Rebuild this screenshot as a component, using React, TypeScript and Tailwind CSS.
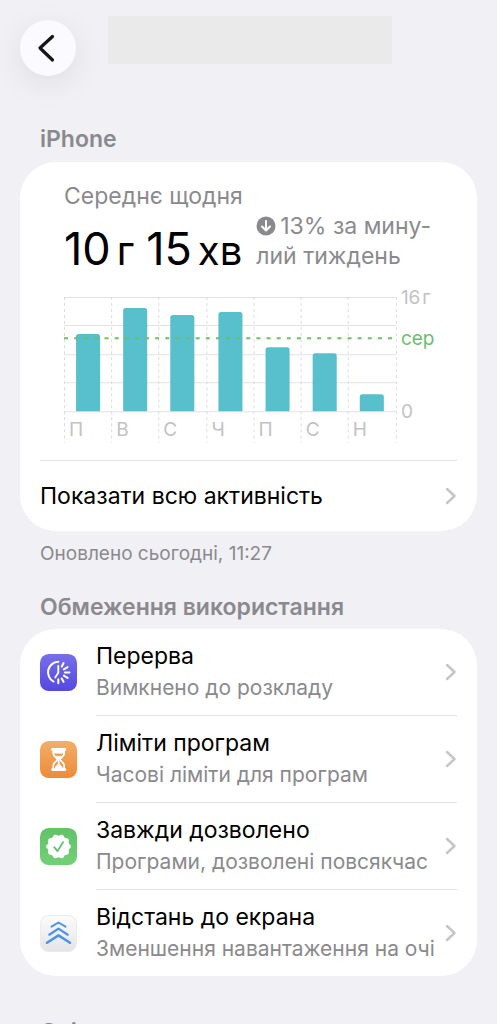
import type { ReactNode } from "react";

const days = [
  { label: "П", value: 77 },
  { label: "В", value: 103 },
  { label: "С", value: 96 },
  { label: "Ч", value: 99 },
  { label: "П", value: 64 },
  { label: "С", value: 58 },
  { label: "Н", value: 17 },
];

const columnEdges = [0, 47, 94, 142, 189, 236, 283, 331];
const gridLines = [9, 37, 66, 94, 123];

function Chevron() {
  return (
    <svg viewBox="0 0 12 20" className="h-5 w-3 shrink-0" fill="none" stroke="#c6c6c9" strokeWidth="2.5" strokeLinecap="round" strokeLinejoin="round" aria-hidden="true">
      <path d="M2 3l7.500 7L2 17" />
    </svg>
  );
}

function UsageChart() {
  return (
    <svg viewBox="0 0 376 158" className="block w-full" role="img" aria-label="Середнє щодня">
      <g stroke="#e2e2e4" strokeWidth="1">
        {gridLines.map((y) => (
          <path key={y} d={`M0 ${y + 0.5}H331`} />
        ))}
      </g>
      <g stroke="#dcdcdf" strokeWidth="1" strokeDasharray="3 3">
        {columnEdges.map((x) => (
          <path key={x} d={`M${x + 0.5} 9V154`} />
        ))}
      </g>
      {days.map((day, i) => {
        const x = columnEdges[i] + 12;
        const top = 123 - day.value;
        return (
          <g key={i}>
            <path d={`M${x} 123V${top + 2.5}q0-2.500 2.500-2.500h19q2.500 0 2.500 2.500V123z`} fill="#58bfcd" />
            <text x={columnEdges[i] + 5} y="148" fontSize="19" fill="#c2c2c4">
              {day.label}
            </text>
          </g>
        );
      })}
      <path d="M0 50H331" stroke="#6cbf63" strokeWidth="2" strokeDasharray="4 6.1" />
      <text x="336" y="16" fontSize="19" fill="#c2c2c4">{"16\u200Aг"}</text>
      <text x="336" y="57" fontSize="19" fill="#6cbf6c">сер</text>
      <text x="336" y="130" fontSize="19" fill="#c2c2c4">0</text>
    </svg>
  );
}

function DowntimeIcon() {
  return (
    <svg viewBox="0 0 36 36" className="size-[37px] shrink-0" aria-hidden="true">
      <defs>
        <linearGradient id="downtime" x1="0" y1="0" x2="0" y2="1">
          <stop offset="0" stopColor="#786fe8" />
          <stop offset="1" stopColor="#5448e2" />
        </linearGradient>
      </defs>
      <rect width="36" height="36" rx="8.5" fill="url(#downtime)" />
      <g fill="none" stroke="#fff" strokeLinecap="round">
        <path d="M17.800 7.600A10.200 10.200 0 0 0 13.200 26.800" strokeWidth="2" />
        <path d="M17.800 11.500V18.300l-3 4.500" strokeWidth="1.800" strokeLinejoin="round" />
        <path d="M22.900 8.900l-1.700 3.300M26.800 12.700l-3.600 2.200M28.600 18h-4.400M26.800 23.300l-3.600-2.200M22.900 27.100l-1.800-3.300M17.800 28.400v-3.800" strokeWidth="2" />
      </g>
    </svg>
  );
}

function LimitsIcon() {
  return (
    <svg viewBox="0 0 36 36" className="size-[37px] shrink-0" aria-hidden="true">
      <defs>
        <linearGradient id="limits" x1="0" y1="0" x2="0" y2="1">
          <stop offset="0" stopColor="#f2ae68" />
          <stop offset="1" stopColor="#ee8b39" />
        </linearGradient>
      </defs>
      <rect width="36" height="36" rx="8.5" fill="url(#limits)" />
      <g fill="none" stroke="#fff" strokeWidth="1.700" strokeLinecap="round" strokeLinejoin="round">
        <path d="M12.200 8.200h12M12.200 27.800h12" strokeWidth="2.800" />
        <path d="M12.900 9v3.200c0 3 4 4 4 5.800s-4 2.800-4 5.800V27M23.500 9v3.200c0 3-4 4-4 5.800s4 2.800 4 5.800V27" />
      </g>
      <path d="M13 9h10.400v3.200H13zM14.600 14.500h7.200l-2.800 3v4.300c.3 1.500 3 2.400 3.200 5.200h-8c.2-2.800 2.900-3.700 3.200-5.200v-4.300z" fill="#fff" />
    </svg>
  );
}

function sealPath() {
  const points: string[] = [];
  for (let i = 0; i <= 80; i++) {
    const a = (i / 80) * Math.PI * 2;
    const r = 11.3 + 0.8 * Math.cos(a * 10 + Math.PI);
    points.push(`${(18 + r * Math.sin(a)).toFixed(2)} ${(18 - r * Math.cos(a)).toFixed(2)}`);
  }
  return `M${points.join("L")}z`;
}

function AllowedIcon() {
  return (
    <svg viewBox="0 0 36 36" className="size-[37px] shrink-0" aria-hidden="true">
      <defs>
        <linearGradient id="allowed" x1="0" y1="0" x2="0" y2="1">
          <stop offset="0" stopColor="#62c267" />
          <stop offset="1" stopColor="#72d077" />
        </linearGradient>
      </defs>
      <rect width="36" height="36" rx="8.500" fill="url(#allowed)" />
      <path d={sealPath()} fill="#fff" />
      <path d="M13.800 18.600l3.200 3.900 5.500-8.800" fill="none" stroke="#64c069" strokeWidth="1.700" strokeLinecap="round" strokeLinejoin="round" />
    </svg>
  );
}

function DistanceIcon() {
  return (
    <svg viewBox="0 0 36 36" className="size-[37px] shrink-0" aria-hidden="true">
      <defs>
        <linearGradient id="distance" x1="0" y1="0" x2="0" y2="1">
          <stop offset="0" stopColor="#fcfcfc" />
          <stop offset="1" stopColor="#e4e4e6" />
        </linearGradient>
      </defs>
      <rect x=".5" y=".5" width="35" height="35" rx="8" fill="url(#distance)" stroke="#ebebed" />
      <g fill="none" stroke="#4a92ee" strokeLinecap="round" strokeLinejoin="round">
        <path d="M11.200 11.300 18 7.300l6.800 4" strokeWidth="1.900" />
        <path d="M9 19.200 18 13.200l9 6" strokeWidth="2.100" />
        <path d="M6.800 27 18 19.800 29.200 27" strokeWidth="2.400" />
      </g>
    </svg>
  );
}

function SettingRow({ icon, title, detail, last }: { icon: ReactNode; title: string; detail: string; last?: boolean }) {
  return (
    <li>
      <a href="#" className="flex items-stretch gap-[19px]">
        <span className="flex items-center">{icon}</span>
        <span className={`flex min-w-0 flex-1 items-center gap-2 py-[11px] ${last ? "" : "border-b border-[#e2e2e4]"}`}>
          <span className="min-w-0 flex-1 whitespace-nowrap">
            <span className="block text-[23px] leading-8 text-black">{title}</span>
            <span className="block text-[21px] leading-8 text-[#8a8a8d]">{detail}</span>
          </span>
          <Chevron />
        </span>
      </a>
    </li>
  );
}

export default function App() {
  return (
    <div className="h-screen overflow-y-auto bg-[#f1f0f5] px-5 font-['Inter','Liberation_Sans',sans-serif] [scrollbar-width:none]">
      <header className="flex items-start pt-4">
        <button type="button" aria-label="Назад" className="mt-1 flex size-14 items-center justify-center rounded-full bg-[#fbfaff] shadow-[0_8px_32px_rgba(0,0,0,0.08)]">
          <svg viewBox="0 0 20 30" className="mr-1 h-[30px] w-5" fill="none" stroke="#151517" strokeWidth="3.200" strokeLinecap="round" strokeLinejoin="round" aria-hidden="true">
            <path d="M16.500 3.500 4 15l12.500 12" />
          </svg>
        </button>
        <div className="mr-[85px] ml-8 h-12 flex-1 bg-[#eaeaea]" />
      </header>

      <main>
        <h2 className="mt-[47px] ml-5 text-[23px] leading-8 font-semibold text-[#8a8a8e]">iPhone</h2>
        <section className="mt-[7px] rounded-[36px] bg-white px-5 pt-[19px]">
          <div className="pl-6">
            <p className="text-[23px] leading-[30px] text-[#8a8a8d]">Середнє щодня</p>
            <div className="flex items-start gap-3.5">
              <p className="flex items-baseline gap-3 pt-2 text-[45px] leading-[60px] whitespace-nowrap text-black">
                <span>10<span className="ml-1.5 text-[40px]">г</span></span>{" "}
                <span>15<span className="ml-1.5 text-[40px]">хв</span></span>
              </p>
              <p className="text-[23px] leading-[30px] whitespace-nowrap text-[#8a8a8d]">
                <svg viewBox="0 0 20 20" className="mr-1 mb-1 inline size-5" aria-hidden="true">
                  <circle cx="10" cy="10" r="9.500" fill="#8a8a8e" />
                  <path d="M10 5v9M6 10.500l4 4 4-4" fill="none" stroke="#fff" strokeWidth="2" strokeLinecap="round" strokeLinejoin="round" />
                </svg>
                13% за мину-
                <br />
                лий тиждень
              </p>
            </div>
          </div>
          <div className="mt-[7px] pr-4 pl-6">
            <UsageChart />
          </div>
          <a href="#" className="mt-3.5 flex items-center justify-between border-t border-[#e2e2e4] text-[23px] leading-[70px] text-black">
            Показати всю активність
            <Chevron />
          </a>
        </section>
        <p className="mt-2 ml-5 text-[19px] leading-[30px] text-[#8a8a8e]">Оновлено сьогодні, 11:27</p>

        <h2 className="mt-[22px] ml-5 text-[23px] leading-8 font-semibold text-[#8a8a8e]">Обмеження використання</h2>
        <ul className="mt-1.5 rounded-[36px] bg-white px-5">
          <SettingRow icon={<DowntimeIcon />} title="Перерва" detail="Вимкнено до розкладу" />
          <SettingRow icon={<LimitsIcon />} title="Ліміти програм" detail="Часові ліміти для програм" />
          <SettingRow icon={<AllowedIcon />} title="Завжди дозволено" detail="Програми, дозволені повсякчас" />
          <SettingRow icon={<DistanceIcon />} title="Відстань до екрана" detail="Зменшення навантаження на очі" last />
        </ul>

        <h2 className="mt-10 ml-5 text-[23px] leading-8 font-semibold text-[#8a8a8e]">Спілкування</h2>
      </main>
    </div>
  );
}
